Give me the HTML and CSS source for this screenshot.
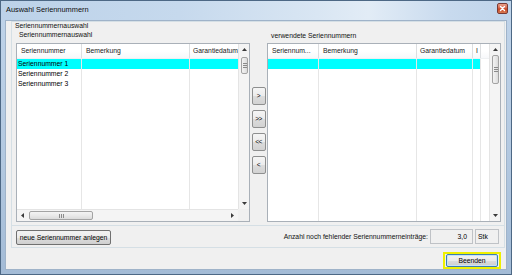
FILE: index.html
```html
<!DOCTYPE html>
<html lang="de">
<head>
<meta charset="utf-8">
<title>Auswahl Seriennummern</title>
<link rel="stylesheet" href="styles.css">
</head>
<body>
<div class="window">
  <div class="titlebar">
    <span class="title">Auswahl Seriennummern</span>
    <span class="close"><svg width="11" height="11" viewBox="0 0 11 11"><path d="M3.5 3.5L7.5 7.5M7.5 3.5L3.5 7.5" stroke="#fff" stroke-width="1.4" stroke-linecap="round"/></svg></span>
  </div>
  <div class="client">
    <div class="group">
      <div class="group-title">Seriennummernauswahl</div>
      <div class="lists">
        <div class="col col-left">
          <div class="col-label">Seriennummernauswahl</div>
          <div class="listview">
            <div class="lv-top">
              <div class="lv-area">
                <div class="lv-header">
                  <div class="hc l1">Seriennummer</div>
                  <div class="hc l2">Bemerkung</div>
                  <div class="hc l3 last">Garantiedatum</div>
                </div>
                <div class="lv-body">
                  <div class="bc l1"><div class="cell sel">Seriennummer 1</div><div class="cell">Seriennummer 2</div><div class="cell">Seriennummer 3</div></div>
                  <div class="bc l2"><div class="cell sel"></div></div>
                  <div class="bc l3 last"><div class="cell sel"></div></div>
                </div>
              </div>
              <div class="vscroll">
                <div class="sb-btn"><svg width="5" height="3" viewBox="0 0 5 3"><path d="M0 3L2.5 0L5 3z" fill="#3a3a3a"/></svg></div>
                <div class="vthumb vthumb-left"><span class="grip-v"></span></div>
                <div class="sb-fill"></div>
                <div class="sb-btn"><svg width="5" height="3" viewBox="0 0 5 3"><path d="M0 0L2.5 3L5 0z" fill="#3a3a3a"/></svg></div>
              </div>
            </div>
            <div class="hscroll-row">
              <div class="hscroll">
                <div class="sb-hbtn"><svg width="3" height="5" viewBox="0 0 3 5"><path d="M3 0L0 2.5L3 5z" fill="#3a3a3a"/></svg></div>
                <div class="hthumb"><span class="grip-h"></span></div>
                <div class="sb-fill"></div>
                <div class="sb-hbtn"><svg width="3" height="5" viewBox="0 0 3 5"><path d="M0 0L3 2.5L0 5z" fill="#3a3a3a"/></svg></div>
              </div>
              <div class="corner"></div>
            </div>
          </div>
        </div>
        <div class="arrows">
          <button class="arrow-btn">&gt;</button>
          <button class="arrow-btn">&gt;&gt;</button>
          <button class="arrow-btn">&lt;&lt;</button>
          <button class="arrow-btn">&lt;</button>
        </div>
        <div class="col col-right">
          <div class="col-label right-label">verwendete Seriennummern</div>
          <div class="listview">
            <div class="lv-top">
              <div class="lv-area">
                <div class="lv-header">
                  <div class="hc r1">Seriennum...</div>
                  <div class="hc r2">Bemerkung</div>
                  <div class="hc r3">Garantiedatum</div>
                  <div class="hc r4">I</div>
                  <div class="hc r5 last"></div>
                </div>
                <div class="lv-body">
                  <div class="bc r1"><div class="cell sel"></div></div>
                  <div class="bc r2"><div class="cell sel"></div></div>
                  <div class="bc r3"><div class="cell sel"></div></div>
                  <div class="bc r4"><div class="cell sel"></div></div>
                  <div class="bc r5 last"></div>
                </div>
              </div>
              <div class="vscroll">
                <div class="sb-btn"><svg width="5" height="3" viewBox="0 0 5 3"><path d="M0 3L2.5 0L5 3z" fill="#3a3a3a"/></svg></div>
                <div class="vthumb vthumb-right"><span class="grip-v"></span></div>
                <div class="sb-fill"></div>
                <div class="sb-btn"><svg width="5" height="3" viewBox="0 0 5 3"><path d="M0 0L2.5 3L5 0z" fill="#3a3a3a"/></svg></div>
              </div>
            </div>
          </div>
        </div>
      </div>
      <div class="bottom">
        <button class="btn new-btn">neue Seriennummer anlegen</button>
        <div class="spacer"></div>
        <span class="count-label">Anzahl noch fehlender Seriennummerneinträge:</span>
        <div class="field num">3,0</div>
        <div class="field unit">Stk</div>
      </div>
    </div>
    <div class="footer">
      <div class="focus"><button class="btn end-btn">Beenden</button></div>
    </div>
  </div>
</div>
</body>
</html>
```

FILE: styles.css
```css
* { box-sizing: border-box; margin: 0; padding: 0; }
html, body { width: 512px; height: 275px; overflow: hidden; }
body {
  font-family: "Liberation Sans", Arial, sans-serif;
  font-size: 6.8px;
  color: #000;
  background: #ffffff;
}
button { font-family: inherit; font-size: inherit; color: #000; }

.window {
  width: 512px;
  height: 275px;
  display: flex;
  flex-direction: column;
  border: 1px solid #4d6885;
  padding: 0 4px 4px 4px;
  background: linear-gradient(to bottom, #c0d4ea 0%, #b2c8e0 60%, #a3bbd6 100%);
}

.titlebar {
  height: 19px;
  flex: none;
  display: flex;
  align-items: flex-start;
  margin: 0 -4px;
  padding: 0 3px 0 5px;
  background: linear-gradient(to right, #bcd2e9 0%, #c6d9ed 35%, #d9e6f3 62%, #e2ecf6 72%, #c8daee 88%, #bfd4ea 100%);
}
.title {
  font-size: 7.4px;
  line-height: 18px;
  color: #0d0d0d;
}
.close {
  margin-left: auto;
  margin-top: 2px;
  width: 11px;
  height: 11px;
  border-radius: 2px;
  border: 1px solid #7a3a33;
  background: linear-gradient(to bottom, #e8a08a 0%, #d8664a 45%, #c7431f 55%, #d87a52 100%);
  display: flex;
}
.close svg { margin: -1px; }

.client {
  flex: 1;
  background: #f0f0f0;
  border: 1px solid #9fb3c9;
  display: flex;
  flex-direction: column;
}

.group {
  margin: 0 1px 0 5px;
  height: 227px;
  flex: none;
  border: 1px solid #d5dfe5;
  display: flex;
  flex-direction: column;
}
.group-title {
  height: 9px;
  line-height: 8px;
  padding-left: 3px;
  color: #111;
}

.lists {
  display: flex;
  padding: 0 0 3px 4px;
  border-bottom: 1px solid #d5dfe5;
}
.col {
  width: 234px;
  display: flex;
  flex-direction: column;
}
.col-label {
  height: 12px;
  line-height: 8px;
  padding-left: 3px;
  color: #111;
}
.right-label { padding-left: 4px; line-height: 9px; }

.listview {
  height: 179px;
  border: 1px solid #a9b0b8;
  background: #fff;
  display: flex;
  flex-direction: column;
}
.lv-top { flex: 1; display: flex; min-height: 0; }
.lv-area { flex: 1; display: flex; flex-direction: column; }

.lv-header {
  height: 15px;
  display: flex;
  background: linear-gradient(to bottom, #ffffff 0%, #ffffff 50%, #f7f8fa 100%);
  border-bottom: 1px solid #eef0f2;
}
.hc {
  line-height: 14px;
  padding-left: 4px;
  border-right: 1px solid #dcdee0;
  white-space: nowrap;
  overflow: hidden;
  color: #1a1a1a;
}
.hc.last { border-right: none; }

.lv-body { flex: 1; display: flex; }
.bc {
  border-right: 1px solid #e6e6e6;
  display: flex;
  flex-direction: column;
}
.bc.last { border-right: none; }
.cell {
  height: 10px;
  line-height: 10px;
  padding-left: 1px;
  white-space: nowrap;
}
.cell.sel { background: #00ffff; }

.l1 { width: 65px; }
.l2 { width: 108px; }
.l3 { flex: 1; padding-left: 3px; }
.bc.l3 { padding-left: 0; }

.r1 { width: 51px; }
.r2 { width: 98px; }
.r3 { width: 56px; padding-left: 3px; }
.r4 { width: 8px; padding-left: 3px; overflow: visible; color: #222; }
.bc.r3, .bc.r4 { padding-left: 0; }
.r5 { flex: 1; }

.vscroll {
  width: 11px;
  display: flex;
  flex-direction: column;
  background: #f4f4f4;
  border-left: 1px solid #e4e4e4;
}
.sb-btn {
  height: 11px;
  display: flex;
  align-items: center;
  justify-content: center;
  flex: none;
}
.sb-fill { flex: 1; }
.vthumb {
  margin: 0 1px 0 2px;
  border: 1px solid #a3a3a3;
  border-radius: 2px;
  background: linear-gradient(to right, #f3f3f3 0%, #e9e9e9 50%, #dbdbdb 100%);
  display: flex;
  align-items: center;
  justify-content: center;
  flex: none;
}
.vthumb-left { margin-top: 2px; height: 17px; }
.vthumb-right { margin-top: 0; height: 29px; }
.grip-v {
  width: 4px;
  height: 5px;
  background: repeating-linear-gradient(to bottom, #8a8a8a 0 1px, transparent 1px 2px);
}

.hscroll-row { height: 12px; display: flex; flex: none; }
.hscroll {
  flex: 1;
  display: flex;
  background: #f4f4f4;
  border-top: 1px solid #e4e4e4;
}
.sb-hbtn {
  width: 11px;
  display: flex;
  align-items: center;
  justify-content: center;
  flex: none;
}
.hthumb {
  margin: 1px 0 1px 1px;
  width: 64px;
  border: 1px solid #a3a3a3;
  border-radius: 2px;
  background: linear-gradient(to bottom, #f3f3f3 0%, #e9e9e9 50%, #dbdbdb 100%);
  display: flex;
  align-items: center;
  justify-content: center;
}
.grip-h {
  width: 5px;
  height: 4px;
  background: repeating-linear-gradient(to right, #8a8a8a 0 1px, transparent 1px 2px);
}
.corner { width: 11px; background: #f0f0f0; }

.arrows {
  width: 17px;
  padding-top: 56px;
  display: flex;
  flex-direction: column;
  align-items: center;
  gap: 5px;
}
.arrow-btn {
  width: 14px;
  height: 18px;
  border: 1px solid #8e8f8f;
  border-radius: 2px;
  background: linear-gradient(to bottom, #f5f5f5 0%, #ececec 50%, #dcdcdc 51%, #d2d2d2 100%);
  font-size: 6.5px;
  line-height: 16px;
  text-align: center;
  letter-spacing: -0.5px;
}

.bottom {
  flex: 1;
  display: flex;
  align-items: flex-start;
  padding: 3px 5px 0 4px;
}
.btn {
  border: 1px solid #707070;
  border-radius: 2px;
  background: linear-gradient(to bottom, #f2f2f2 0%, #ebebeb 50%, #dddddd 51%, #cfcfcf 100%);
}
.new-btn {
  margin-top: 1px;
  width: 95px;
  height: 15px;
  line-height: 13px;
  text-align: center;
  white-space: nowrap;
}
.spacer { flex: 1; }
.count-label {
  line-height: 16px;
  margin-right: 2px;
  white-space: nowrap;
  color: #111;
}
.field {
  height: 15px;
  border: 1px solid #bfc2c6;
  background: #f0f0f0;
  line-height: 13px;
}
.num {
  width: 43px;
  text-align: right;
  padding-right: 5px;
}
.unit {
  width: 24px;
  margin-left: 2px;
  padding-left: 2px;
}

.footer {
  flex: 1;
  display: flex;
  justify-content: flex-end;
  align-items: flex-start;
  padding: 4px 5px 0 0;
}
.focus {
  width: 58px;
  height: 17px;
  border: 2px solid #eef000;
  padding: 0 1px;
  display: flex;
}
.end-btn {
  flex: 1;
  border-color: #3c7fb1;
  box-shadow: inset 0 0 0 1px #c7e4f7;
  line-height: 11px;
  text-align: center;
}
```
